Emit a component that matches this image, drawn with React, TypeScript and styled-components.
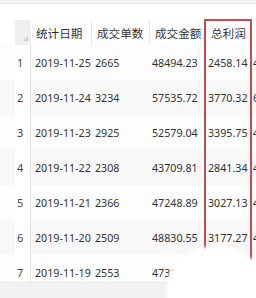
import React from "react";
import styled, { createGlobalStyle } from "styled-components";

const GlobalStyle = createGlobalStyle`
  html, body {
    margin: 0;
    padding: 0;
    background: #ffffff;
  }
  body {
    width: 256px;
    height: 298px;
    overflow: hidden;
  }
`;

const COLS = "15px 16px 61px 58px 55px 46px 1fr";

const Page = styled.main`
  position: relative;
  width: 256px;
  height: 298px;
  display: flex;
  flex-direction: column;
  overflow: hidden;
  font-family: "Noto Sans", "Noto Sans CJK SC", sans-serif;
  color: #333;
`;

const TopStrip = styled.div`
  height: 3px;
  background: #f3f3f3;
  border-bottom: 1px solid #e3e3e3;
`;

const Gap = styled.div`
  height: 16px;
`;

const Sheet = styled.section`
  height: 262px;
  overflow: hidden;
`;

const HeaderRow = styled.div`
  display: grid;
  grid-template-columns: ${COLS};
  height: 25px;
  align-items: stretch;
`;

const Gutter = styled.div``;

const Corner = styled.div`
  background: #efefef;
  display: flex;
  align-items: flex-end;
  justify-content: flex-end;
  padding: 0 3px 4px 0;
`;

const Triangle = styled.span`
  width: 0;
  height: 0;
  border-left: 5px solid transparent;
  border-bottom: 5px solid #cfcfcf;
`;

const HeadCell = styled.div<{ $last?: boolean }>`
  display: flex;
  align-items: center;
  padding-left: ${(p) => (p.$last ? 6 : 5)}px;
  font-family: "Noto Sans CJK SC", sans-serif;
  font-size: 11.6px;
  color: #333;
  white-space: nowrap;
  overflow: hidden;
  border-right: 1px solid #e6e6e6;
`;

const Row = styled.div<{ $shade: boolean }>`
  display: grid;
  grid-template-columns: ${COLS};
  height: 35px;
  align-items: center;
  background: ${(p) => (p.$shade ? "#f8f8f8" : "#fdfdfd")};
`;

const RowNum = styled.div`
  align-self: stretch;
  display: flex;
  align-items: center;
  padding-left: 2px;
  font-size: 11px;
  color: #444;
  background: #ffffff;
  border-right: 1px solid #e4e4e4;
`;

const Cell = styled.div<{ $pad?: number }>`
  padding-left: ${(p) => p.$pad ?? 3}px;
  font-size: 10.7px;
  color: #333;
  white-space: nowrap;
  overflow: hidden;
`;

const BottomBar = styled.div`
  flex: 1;
  background: #f2f2f2;
  border-top: 1px solid #e8e8e8;
`;

const Highlight = styled.div`
  position: absolute;
  left: 204px;
  top: 19px;
  width: 44px;
  height: 240px;
  border: 2.5px solid #c44b50;
  border-bottom: none;
`;

const Glare = styled.div`
  position: absolute;
  left: 166px;
  top: 246px;
  width: 100px;
  height: 90px;
  border-radius: 50%;
  background: #ffffff;
  filter: blur(1.5px);
`;

const GlareTail = styled.div`
  position: absolute;
  left: 236px;
  top: 258px;
  width: 60px;
  height: 60px;
  border-radius: 40%;
  background: #ffffff;
  filter: blur(1.5px);
`;

const headers = ["统计日期", "成交单数", "成交金额", "总利润"];

const rows = [
  ["2019-11-25", "2665", "48494.23", "2458.14", "4125.6"],
  ["2019-11-24", "3234", "57535.72", "3770.32", "6012.4"],
  ["2019-11-23", "2925", "52579.04", "3395.75", "4410.2"],
  ["2019-11-22", "2308", "43709.81", "2841.34", "4187.9"],
  ["2019-11-21", "2366", "47248.89", "3027.13", "4298.5"],
  ["2019-11-20", "2509", "48830.55", "3177.27", "4363.1"],
  ["2019-11-19", "2553", "47319.62", "", ""],
];

export default function App() {
  return (
    <Page>
      <GlobalStyle />
      <TopStrip />
      <Gap />
      <Sheet>
        <HeaderRow>
          <Gutter />
          <Corner>
            <Triangle />
          </Corner>
          {headers.map((h, i) => (
            <HeadCell key={h} $last={i === 3}>
              {h}
            </HeadCell>
          ))}
          <HeadCell />
        </HeaderRow>
        {rows.map((r, i) => (
          <Row key={r[0]} $shade={i % 2 === 1}>
            <Gutter />
            <RowNum>{i + 1}</RowNum>
            <Cell $pad={4}>{r[0]}</Cell>
            <Cell>{r[1]}</Cell>
            <Cell $pad={2}>{r[2]}</Cell>
            <Cell>{r[3]}</Cell>
            <Cell $pad={2}>{r[4]}</Cell>
          </Row>
        ))}
      </Sheet>
      <BottomBar />
      <Highlight />
      <Glare />
      <GlareTail />
    </Page>
  );
}
